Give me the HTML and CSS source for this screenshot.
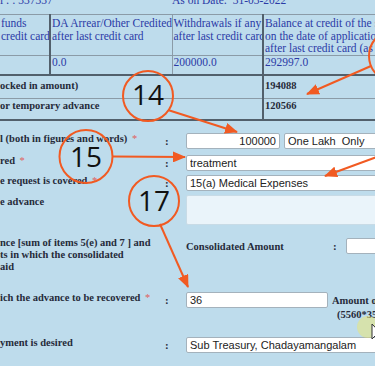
FILE: index.html
```html
<!DOCTYPE html>
<html lang="en">
<head>
	<meta charset="UTF-8">
	<title>Advance Application</title>
	<link rel="stylesheet" href="styles.css">
</head>
<body>
	<div id="page">
		<div class="topline"><span class="empno">l : : 337337</span><span class="asof">As on Date:&nbsp; 31-03-2022</span></div>

		<table class="credit">
			<colgroup><col class="c1"><col class="c2"><col class="c3"><col class="c4"></colgroup>
			<tr class="head">
				<td class="first sep">funds<br>credit card</td>
				<td>DA Arrear/Other Credited<br>after last credit card</td>
				<td class="sep">Withdrawals if any<br>after last credit card</td>
				<td>Balance at credit of the subscriber<br>on the date of application<br>after last credit card (as on date)</td>
			</tr>
			<tr class="data">
				<td class="first sep"></td>
				<td>0.0</td>
				<td class="sep">200000.0</td>
				<td>292997.0</td>
			</tr>
			<tr class="sub">
				<td class="first lbl sep" colspan="3">ocked in amount)</td>
				<td class="num">194088</td>
			</tr>
			<tr class="sub last">
				<td class="first lbl sep" colspan="3">or temporary advance</td>
				<td class="num">120566</td>
			</tr>
		</table>

		<div class="form">
			<div class="row ra">
				<div class="label">l (both in figures and words) <span class="req">*</span></div>
				<div class="colon">:</div>
				<div class="field">
					<input class="inp amt" type="text" value="100000" readonly>
					<input class="inp words" type="text" value="One Lakh  Only" readonly>
				</div>
			</div>
			<div class="row rb">
				<div class="label">red <span class="req">*</span></div>
				<div class="colon">:</div>
				<div class="field"><input class="inp wide" type="text" value="treatment" readonly></div>
			</div>
			<div class="row rc">
				<div class="label">e request is covered <span class="req">*</span></div>
				<div class="colon">:</div>
				<div class="field"><input class="inp wide" type="text" value="15(a) Medical Expenses" readonly></div>
			</div>
			<div class="row rd">
				<div class="label">e advance</div>
				<div class="colon"></div>
				<div class="field"><textarea class="note" readonly></textarea></div>
			</div>
			<div class="row re">
				<div class="label">nce [sum of items 5(e) and 7 ] and<br>ts in which the consolidated<br>aid</div>
				<div class="colon"></div>
				<div class="field cons">
					<span class="cons-label">Consolidated Amount</span>
					<span class="cons-colon">:</span>
					<input class="inp small" type="text" value="" readonly>
				</div>
			</div>
			<div class="row rf">
				<div class="label">ich the advance to be recovered <span class="req">*</span></div>
				<div class="colon">:</div>
				<div class="field">
					<input class="inp inst" type="text" value="36" readonly>
					<div class="side">Amount of<br><span class="calc">(5560*35</span></div>
				</div>
			</div>
			<div class="row rg">
				<div class="label">yment is desired</div>
				<div class="colon">:</div>
				<div class="field"><input class="inp wide" type="text" value="Sub Treasury, Chadayamangalam" readonly></div>
			</div>
		</div>

		<div class="pointer">
			<svg width="12" height="20" viewBox="0 0 12 20"><path d="M1 1 L1 16 L4.5 12.5 L7 18 L9 17 L6.5 11.5 L11 11.5 Z" fill="#fff" stroke="#333" stroke-width="1"/></svg>
		</div>

		<svg class="marks" width="375" height="366" viewBox="0 0 375 366">
			<defs>
				<marker id="tip" markerWidth="13" markerHeight="11" refX="12" refY="5.5" orient="auto" markerUnits="userSpaceOnUse">
					<path d="M0,0 L13,5.5 L0,11 Z" fill="#f15a22"/>
				</marker>
			</defs>
			<g fill="none" stroke="#f15a22" stroke-width="2">
				<circle cx="148" cy="103" r="25"/>
				<circle cx="86" cy="163.5" r="26.5"/>
				<circle cx="154" cy="208" r="25"/>
				<circle cx="395" cy="63" r="26"/>
				<line x1="168" y1="117" x2="237" y2="139" marker-end="url(#tip)"/>
				<line x1="371" y1="73" x2="307" y2="101" marker-end="url(#tip)"/>
				<line x1="113" y1="163.5" x2="185" y2="164" marker-end="url(#tip)"/>
				<line x1="382" y1="162" x2="325" y2="183" marker-end="url(#tip)"/>
				<line x1="160" y1="231" x2="188" y2="294" marker-end="url(#tip)"/>
			</g>
			<g class="num">
				<text x="148" y="112">14</text>
				<text x="86" y="174">15</text>
				<text x="154" y="218">17</text>
			</g>
		</svg>
	</div>
</body>
</html>
```

FILE: styles.css
```css
*{margin:0;padding:0;box-sizing:border-box;}
html,body{overflow:hidden;}
body{
	background-color:#bedcec;
	font-family:"Liberation Serif",serif;
}
#page{
	position:relative;
	width:440px;
	height:366px;
}
.topline{
	display:flex;
	height:14px;
	margin-top:-7px;
	line-height:14px;
	font-size:11.5px;
	color:#2b3aa6;
	white-space:nowrap;
}
.topline .empno{width:172px;}

/* credit card table */
.credit{
	width:440px;
	margin-top:7px;
	border-collapse:collapse;
	table-layout:fixed;
	font-size:11.5px;
	line-height:12.5px;
	color:#2b3aa6;
}
.credit .c1{width:50px;}
.credit .c2{width:122px;}
.credit .c3{width:91px;}
.credit td{
	border:1px solid #8b9ba7;
	padding:2px 0 0 1px;
	vertical-align:top;
	white-space:nowrap;
	overflow:hidden;
}
.credit td.first{border-left:0;}
.credit td.sep{border-right:2px solid #52606c;}
.credit tr.head td{height:39px;}
.credit tr.data td{height:20px;padding-top:0;border-bottom:2px solid #52606c;}
.credit tr.sub td{height:23px;padding-top:4px;}
.credit tr.last td{height:22px;padding-top:1px;border-bottom:2px solid #52606c;}
.credit td.lbl,.credit td.num{
	font-weight:bold;
	font-size:10.5px;
	color:#262b3a;
}
.credit td.lbl{padding-left:0;}

/* form rows */
.form{display:flex;flex-direction:column;}
.row{
	display:grid;
	grid-template-columns:162px 24px 1fr;
	align-items:start;
}
.label{
	font-weight:bold;
	font-size:10.5px;
	line-height:12px;
	color:#262b3a;
	white-space:nowrap;
	overflow:hidden;
}
.req{color:#e0605c;font-weight:normal;margin-left:2px;}
.colon{
	padding-left:3px;
	font-weight:bold;
	font-size:11px;
	line-height:16px;
	color:#262b3a;
}
.field{display:flex;align-items:flex-start;gap:4px;}
.inp{
	height:16px;
	padding:0 3px;
	border:1px solid #a4b2bc;
	border-radius:2px;
	background-color:#fff;
	font-family:"Liberation Sans",Arial,sans-serif;
	font-size:11px;
	color:#222;
	outline:none;
}
.amt{width:94px;text-align:right;}
.words{width:150px;}
.wide{width:220px;}
.small{width:40px;}
.inst{width:142px;}
.note{
	display:block;
	width:220px;
	height:30px;
	border:1px solid #c8dbe6;
	border-radius:2px;
	background-color:#eaf4fa;
	resize:none;
	outline:none;
}

.ra{margin-top:12px;}
.rb{margin-top:6px;}
.rc{margin-top:4px;}
.rd{margin-top:4px;}
.rd .label{padding-top:1px;}
.re{margin-top:12px;}
.rf{margin-top:19px;}
.rg{margin-top:15px;}

.cons{align-items:center;gap:0;margin-top:1px;}
.cons-label{
	width:147px;
	font-weight:bold;
	font-size:10.5px;
	color:#262b3a;
}
.cons-colon{
	width:13px;
	font-weight:bold;
	font-size:11px;
	color:#262b3a;
}
.side{
	margin-top:2px;
	font-weight:bold;
	font-size:10.5px;
	line-height:14px;
	color:#262b3a;
	white-space:nowrap;
}
.side .calc{padding-left:5px;}

/* screen recording overlays */
.pointer{
	position:absolute;
	left:357px;
	top:323px;
	width:22px;
	height:22px;
	border-radius:50%;
	background-color:rgba(238,232,110,0.5);
}
.pointer svg{position:absolute;left:14px;top:7px;}
.marks{
	position:absolute;
	left:0;
	top:0;
	pointer-events:none;
}
.marks .num text{
	font-family:"Open Sans",sans-serif;
	font-size:28px;
	fill:#111;
	text-anchor:middle;
}
```
